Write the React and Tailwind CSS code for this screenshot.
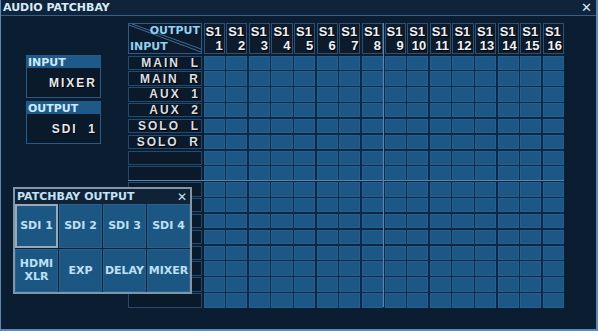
import React from "react";

const cols = Array.from({ length: 16 }, (_, i) => i + 1);
const labels = ["MAIN L", "MAIN R", "AUX 1", "AUX 2", "SOLO L", "SOLO R", "", "", "", "", "", "", "", "", "", ""];
const buttons = [["SDI 1"], ["SDI 2"], ["SDI 3"], ["SDI 4"], ["HDMI", "XLR"], ["EXP"], ["DELAY"], ["MIXER"]];

const dv = { fontFamily: '"DejaVu Sans", "Liberation Sans", sans-serif' };
const ls = { fontFamily: '"Liberation Sans", Arial, sans-serif' };

export default function App() {
  return (
    <div className="relative w-[598px] h-[331px] overflow-hidden bg-[#0b1d31] border-l border-r-2 border-b-2 border-[#5d88b3] flex flex-col" style={ls}>
      {/* title bar */}
      <div className="h-[16px] shrink-0 bg-[#0f233a] border-b border-[#3a5f85] flex items-center justify-between pl-[2px] pr-[4px]">
        <span className="text-[11px] font-bold leading-none text-[#d6ebf8]" style={dv}>AUDIO PATCHBAY</span>
        <span className="text-[13px] leading-none text-[#d6ebf8]" style={dv}>✕</span>
      </div>

      <div className="flex flex-1">
        {/* left */}
        <div className="w-[127px] shrink-0 pt-[39px] pl-[25px] flex flex-col gap-[3px]">
          {[["INPUT", "MIXER"], ["OUTPUT", "SDI 1"]].map(([h, v]) => (
            <div key={h} className="w-[75px] border border-[#2b5a87] flex flex-col">
              <div className="h-[12px] bg-[#1d5a8a] flex items-center pl-[1px] text-[11px] font-bold leading-none text-[#cfeaff]" style={dv}>{h}</div>
              <div className="h-[29px] bg-[#0b1a2b] flex items-center justify-end pr-[3px] text-[12px] font-bold tracking-[2px] text-[#e6e9ec] whitespace-pre [text-shadow:1px_1px_0_#000]">{v === "SDI 1" ? "SDI  1" : v}</div>
            </div>
          ))}
        </div>

        {/* grid */}
        <div className="relative pt-[7px] w-[436px] flex flex-col">
          {/* header */}
          <div className="grid grid-cols-[74px_repeat(16,minmax(0,1fr))] gap-x-[1.5px] h-[31px]">
            <div className="relative border border-[#2f5b84] bg-[#0c1a2b]">
              <svg className="absolute inset-0" width="72" height="29" viewBox="0 0 72 29">
                <line x1="0" y1="1" x2="72" y2="28" stroke="#3d6e9c" strokeWidth="1" />
                <line x1="3" y1="0" x2="72" y2="25" stroke="#3d6e9c" strokeWidth="1" />
              </svg>
              <span className="absolute right-[1px] top-[1px] text-[11px] font-bold leading-none text-[#8fd1f2]" style={dv}>OUTPUT</span>
              <span className="absolute left-[1px] bottom-[1px] text-[11px] font-bold leading-none text-[#8fd1f2]" style={dv}>INPUT</span>
            </div>
            {cols.map((c) => (
              <div key={c} className="border border-[#2b5177] bg-[#0d1b2b] flex flex-col justify-between px-[1px] py-[1px] text-[13px] font-bold leading-[13px] text-[#eef2f6] [text-shadow:1px_1px_0_#000]">
                <span className="block h-[13px] text-left">S1</span>
                <span className="block h-[13px] text-right">{c}</span>
              </div>
            ))}
          </div>

          {/* body */}
          <div className="mt-[1.5px] h-[252px] flex gap-x-[1.5px]">
            <div className="w-[74px] grid grid-rows-[repeat(16,minmax(0,1fr))] gap-y-[1.5px]">
              {labels.map((l, i) => (
                <div key={i} className="border border-[#264a6d] bg-[#0b1a2b] flex items-center justify-end pr-[1px] text-[12px] font-bold tracking-[2px] leading-none text-[#dcdfe2] whitespace-pre [text-shadow:1px_1px_0_#000]">
                  {l.replace(" ", "  ")}
                </div>
              ))}
            </div>
            <div className="flex-1 grid grid-cols-16 grid-rows-[repeat(16,minmax(0,1fr))] gap-[1.5px] bg-[#0c2844]">
              {Array.from({ length: 256 }, (_, i) => (
                <div key={i} className="bg-[#1c5786] border border-[#22608f]" />
              ))}
            </div>
          </div>

          {/* divider lines */}
          <div className="absolute left-[254.5px] top-[7px] w-px h-[284px] bg-[#5b85ad]" />
          <div className="absolute left-0 top-[164px] w-[436px] h-px bg-[#5b85ad]" />
        </div>
      </div>

      {/* popup */}
      <div className="absolute left-[12px] top-[187px] w-[179px] h-[107px] border-2 border-[#8294a7] bg-[#0f2236] flex flex-col">
        <div className="h-[15px] flex items-center justify-between pl-[2px] pr-[3px]">
          <span className="text-[11px] font-bold leading-none text-[#c3e2f6]" style={dv}>PATCHBAY OUTPUT</span>
          <span className="text-[12px] leading-none text-[#c3e2f6]" style={dv}>✕</span>
        </div>
        <div className="flex-1 grid grid-cols-4 grid-rows-2 gap-[1px] bg-[#0c1e31]">
          {buttons.map((b, i) => (
            <div key={i} className={`flex flex-col items-center justify-center bg-[#1c5784] text-[11px] font-bold leading-[13px] text-[#bfe0f6] ${i === 0 ? "border-2 border-[#9aa9b8]" : "border border-[#24628f]"}`} style={dv}>
              {b.map((t) => <span key={t}>{t}</span>)}
            </div>
          ))}
        </div>
      </div>
    </div>
  );
}
